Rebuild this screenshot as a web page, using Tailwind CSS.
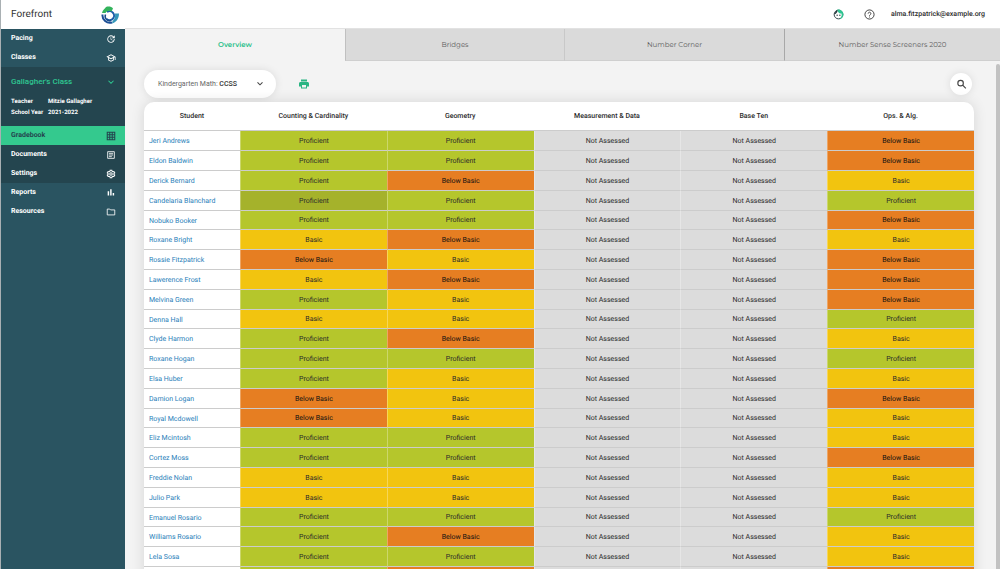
<!DOCTYPE html>
<html lang="en">
<head>
<meta charset="utf-8">
<title>Forefront Gradebook</title>
<script src="https://cdn.jsdelivr.net/npm/@tailwindcss/browser@4"></script>
</head>
<body class="flex h-screen overflow-hidden bg-[#f3f3f3] font-[Roboto,sans-serif] text-[7px] text-[#2b2b2b] [text-rendering:geometricPrecision]">
<aside class="flex w-[125px] shrink-0 flex-col border-l border-[#a9b0b3] bg-[#2a5461] text-white">
  <div class="flex h-[29px] shrink-0 items-center justify-between bg-white pr-[6px] pl-[10px] text-[10px] text-[#333]">
    <span>Forefront</span>
    <svg class="size-[18px]" viewBox="0 0 36 36" fill="none">
      <path d="M3 17A15 15 0 0 0 22 33" stroke="#1c4f96" stroke-width="4"/>
      <path d="M11 26A9 9 0 1 0 12 12" stroke="#1d5fa8" stroke-width="4"/>
      <path d="M9 17A9 9 0 0 0 20 29" stroke="#174a8c" stroke-width="3"/>
      <path d="M2 14C3 8 8 5 10 2C15 0 21 1 24 5L21 11C16 8 12 10 9 14Z" fill="#33b35c"/>
      <path d="M28 15H36C36 26 30 33 22 35L23 30C27 27 29 22 28 15Z" fill="#3596b8"/>
    </svg>
  </div>
  <nav class="flex flex-col font-bold">
    <a href="#" class="flex h-[19px] items-center justify-between pr-[9px] pl-[10px]">Pacing
      <svg class="size-[10px]" viewBox="0 0 24 24" fill="currentColor"><path d="M21 10.100h-6.800l2.700-2.800c-2.700-2.700-7.100-2.800-9.800-.1-2.700 2.700-2.700 7.100 0 9.800s7.100 2.700 9.800 0c1.400-1.400 2-3 2-4.900H21c0 2-.9 4.600-2.600 6.300-3.500 3.500-9.200 3.500-12.700 0s-3.500-9.100 0-12.600 9.100-3.500 12.600 0L21 3v7.100zM12.500 8v4.300l3.500 2.100-.7 1.200L11 13V8h1.500z"/></svg></a>
    <a href="#" class="flex h-[19px] items-center justify-between pr-[9px] pl-[10px]">Classes
      <svg class="size-[10px]" viewBox="0 0 24 24" fill="currentColor"><path d="M12 3 1 9l4 2.200v6L12 21l7-3.800v-6l2-1.100V17h2V9L12 3zm6.800 6L12 12.700 5.200 9 12 5.300 18.800 9zM17 16l-5 2.700L7 16v-3.700l5 2.700 5-2.700V16z"/></svg></a>
    <div class="flex flex-col bg-[#24454f]">
      <button class="flex h-[29px] items-center justify-between pr-[9px] pl-[10px] text-[8px] font-medium text-[#2fc892]">Gallagher's Class
        <svg class="size-[10px]" viewBox="0 0 24 24" fill="none" stroke="currentColor" stroke-width="2.500"><path d="m6 9 6 6 6-6"/></svg></button>
      <dl class="grid h-[30px] grid-cols-[37px_1fr] content-start pl-[10px] text-[6px]/[11px]">
        <dt>Teacher</dt><dd>Mitzie Gallagher</dd>
        <dt>School Year</dt><dd>2021-2022</dd>
      </dl>
      <a href="#" class="flex h-[19px] items-center justify-between bg-[#34c98e] pr-[9px] pl-[10px] text-[#24454f]">Gradebook
        <svg class="size-[10px]" viewBox="0 0 24 24" fill="none" stroke="currentColor" stroke-width="2.500"><path d="M3 3h18v18H3zM9 3v18M15 3v18M3 9h18M3 15h18"/></svg></a>
      <a href="#" class="flex h-[19px] items-center justify-between pr-[9px] pl-[10px]">Documents
        <svg class="size-[10px]" viewBox="0 0 24 24" fill="none" stroke="currentColor" stroke-width="2"><path d="M4 4h16v16H4zM7 8h10M7 12h10M7 16h7"/></svg></a>
      <a href="#" class="flex h-[19px] items-center justify-between pr-[9px] pl-[10px]">Settings
        <svg class="size-[10px]" viewBox="0 0 24 24" fill="none" stroke="currentColor" stroke-width="2.500"><path d="m10 3-.5 2.500-2 1.200L5 6 3 9.500 5 11v2l-2 1.500L5 18l2.500-.7 2 1.200L10 21h4l.5-2.500 2-1.200 2.500.7 2-3.500-2-1.500v-2l2-1.500L19 6l-2.500.7-2-1.200L14 3z"/><circle cx="12" cy="12" r="3"/></svg></a>
    </div>
    <a href="#" class="flex h-[19px] items-center justify-between pr-[9px] pl-[10px]">Reports
      <svg class="size-[10px]" viewBox="0 0 24 24" fill="currentColor"><path d="M4 8h3.500v10H4zM10 3h3.500v15H10zM16 12h3.500v6H16z"/></svg></a>
    <a href="#" class="flex h-[19px] items-center justify-between pr-[9px] pl-[10px]">Resources
      <svg class="size-[10px]" viewBox="0 0 24 24" fill="none" stroke="currentColor" stroke-width="2"><path d="M3 5h6l2 2h10v12H3z"/></svg></a>
  </nav>
</aside>
<div class="flex min-w-0 flex-1 flex-col">
  <header class="flex h-[29px] shrink-0 items-center justify-end border-b border-[#e2e2e2] bg-white pr-[15px]">
    <button aria-label="Profile" class="mr-5"><svg class="size-[11px]" viewBox="0 0 24 24" fill="none"><circle cx="12" cy="12" r="9.500" stroke="#26383d" stroke-width="2"/><path d="M9 1.500C15 0 22.500 4 22.800 12 22.800 17 19 22 14 22.500 18 19 20 15 18.500 10 14 10 10.500 8 9 1.500Z" fill="#2ec592"/><path d="M2 12C7 11 9.500 8 10 4L7 3Z" fill="#26383d"/><circle cx="9" cy="13.500" r="1.500" fill="#26383d"/><circle cx="15" cy="13.500" r="1.500" fill="#26383d"/></svg></button>
    <button aria-label="Help" class="mr-4"><svg class="size-[11px]" viewBox="0 0 24 24" fill="none" stroke="#333" stroke-width="2"><circle cx="12" cy="12" r="10"/><path d="M9 10a3 3 0 1 1 4.500 2.600C12.400 13.300 12 14 12 15M12 16.500v2"/></svg></button>
    <span class="pt-px font-medium">alma.fitzpatrick@example.org</span>
  </header>
  <nav class="grid h-8 shrink-0 grid-cols-[220fr_219fr_220fr_216fr] text-center font-[Montserrat,Inter,sans-serif] text-[7px] text-[#606060]">
    <a href="#" class="flex items-center justify-center font-semibold text-[#2ac08a]">Overview</a>
    <a href="#" class="flex items-center justify-center border-b border-l border-b-[#cfcfcf] border-l-[#c0c0c0] bg-[#dadada] pt-px">Bridges</a>
    <a href="#" class="flex items-center justify-center border-b border-l border-b-[#cfcfcf] border-l-[#c8c8c8] bg-[#dadada] pt-px">Number Corner</a>
    <a href="#" class="flex items-center justify-center border-b border-l border-b-[#cfcfcf] border-l-[#a8a8a8] bg-[#dadada] pt-px">Number Sense Screeners 2020</a>
  </nav>
  <div class="flex min-h-0 flex-1 justify-between">
    <main class="flex min-w-0 flex-1 flex-col overflow-hidden pt-[9px] pr-[22px] pl-[19px]">
      <div class="mb-1 flex shrink-0 items-center">
        <button class="flex h-7 w-[132px] items-center justify-between rounded-full bg-white pr-[11px] pl-[14px] text-[#666] shadow-[0_0_8px_#0000001a]"><span>Kindergarten Math: <b class="font-medium text-[#333]">CCSS</b></span>
          <svg class="size-[10px]" viewBox="0 0 24 24" fill="none" stroke="#444" stroke-width="2.500"><path d="m6 8 6 6 6-6"/></svg></button>
        <button aria-label="Print" class="ml-[22px]"><svg class="size-3" viewBox="0 0 24 24" fill="#2ab583"><path d="M19 8H5c-1.700 0-3 1.300-3 3v6h4v4h12v-4h4v-6c0-1.700-1.300-3-3-3zm-3 11H8v-5h8v5zm2-16H6v4h12V3z"/></svg></button>
        <button aria-label="Search" class="mr-[2px] ml-auto flex size-[22px] items-center justify-center rounded-full bg-white shadow-[0_0_8px_#0000001a]"><svg class="size-[11px]" viewBox="0 0 24 24" fill="none" stroke="#444" stroke-width="2.500"><circle cx="10" cy="9" r="6"/><path d="m14.500 13.500 7 7"/></svg></button>
      </div>
      <table class="w-full shrink-0 table-fixed border-separate border-spacing-0 rounded-t-[10px] bg-white text-center shadow-[0_0_14px_#0000001f]">
        <colgroup><col class="w-24"><col><col><col><col><col></colgroup>
        <thead><tr class="h-[29px] *:border-b *:border-[#cccccc] *:p-0 *:pt-px *:font-medium">
          <th>Student</th><th>Counting &amp; Cardinality</th><th>Geometry</th><th>Measurement &amp; Data</th><th>Base Ten</th><th>Ops. &amp; Alg.</th>
        </tr></thead>
        <tbody id="grades"></tbody>
      </table>
    </main>
    <div class="mt-[3px] w-1 shrink-0 rounded-t-sm bg-[#c2c2c2]"></div>
  </div>
</div>
<script>
  const levels = {
    P: ['Proficient', 'bg-[#b5c62c]'],
    D: ['Proficient', 'bg-[#a5b22b]'],
    B: ['Basic', 'bg-[#f2c40f]'],
    X: ['Below Basic', 'bg-[#e67e22] text-[#111]'],
    N: ['Not Assessed', 'bg-[#dcdcdc]']
  };
  const students = [
    ['Jeri Andrews', 'PPNNX'], ['Eldon Baldwin', 'PPNNX'], ['Derick Bernard', 'PXNNB'],
    ['Candelaria Blanchard', 'DPNNP'], ['Nobuko Booker', 'PPNNX'], ['Roxane Bright', 'BXNNB'],
    ['Rossie Fitzpatrick', 'XBNNX'], ['Lawerence Frost', 'BXNNX'], ['Melvina Green', 'PBNNX'],
    ['Denna Hall', 'BBNNP'], ['Clyde Harmon', 'PXNNB'], ['Roxane Hogan', 'PPNNP'],
    ['Elsa Huber', 'PBNNB'], ['Damion Logan', 'XBNNX'], ['Royal Mcdowell', 'XBNNB'],
    ['Eliz Mcintosh', 'PPNNB'], ['Cortez Moss', 'PPNNX'], ['Freddie Nolan', 'BBNNB'],
    ['Julio Park', 'BBNNB'], ['Emanuel Rosario', 'PPNNP'], ['Williams Rosario', 'PXNNB'],
    ['Lela Sosa', 'PPNNB'], ['', 'PXNNX']
  ];
  document.getElementById('grades').innerHTML = students.map(([name, marks]) =>
    `<tr class="h-5 nth-[5n]:h-[19px] *:border-b *:border-b-[#cccccc]">
      <td class="p-0 pt-[2px] text-left"><a href="#" class="pl-[5px] text-[#2980b9]">${name}</a></td>
      ${[...marks].map(m => `<td class="border-l border-l-white/30 p-0 pt-px ${levels[m][1]}">${name ? levels[m][0] : ''}</td>`).join('')}
    </tr>`).join('');
</script>
</body>
</html>
